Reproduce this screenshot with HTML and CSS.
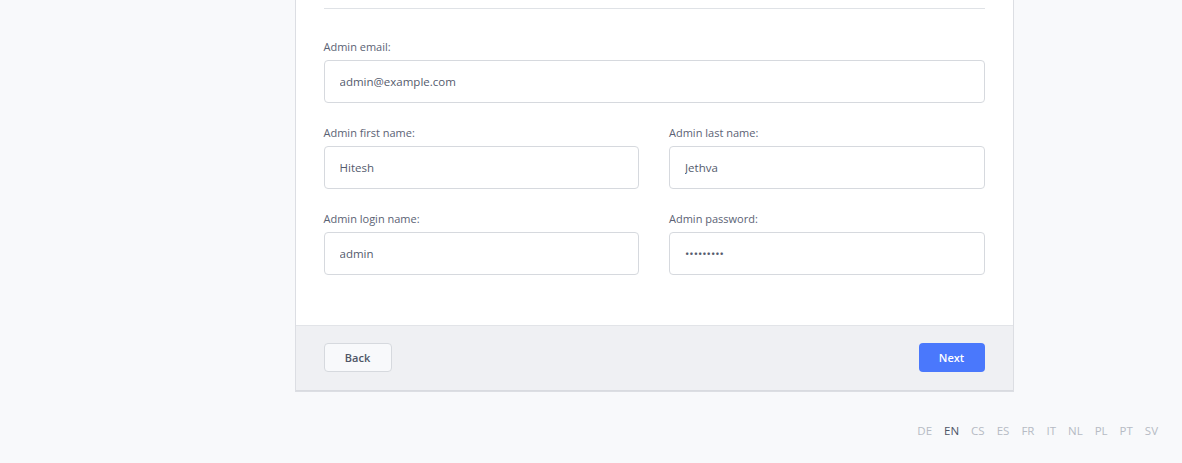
FILE: index.html
```html
<!DOCTYPE html>
<html lang="en">
<head>
    <meta charset="UTF-8">
    <meta name="viewport" content="width=device-width, initial-scale=1.0">
    <title>Install - Admin account</title>
    <link rel="stylesheet" href="styles.css">
</head>
<body>
    <div class="card">
        <div class="card-body">
            <hr class="divider">

            <div class="field">
                <label for="email">Admin email:</label>
                <input type="text" id="email" value="admin@example.com">
            </div>

            <div class="row">
                <div class="field">
                    <label for="firstname">Admin first name:</label>
                    <input type="text" id="firstname" value="Hitesh">
                </div>
                <div class="field">
                    <label for="lastname">Admin last name:</label>
                    <input type="text" id="lastname" value="Jethva">
                </div>
            </div>

            <div class="row">
                <div class="field">
                    <label for="login">Admin login name:</label>
                    <input type="text" id="login" value="admin">
                </div>
                <div class="field">
                    <label for="password">Admin password:</label>
                    <input type="password" id="password" value="123456789">
                </div>
            </div>
        </div>
        <div class="card-footer">
            <button class="btn btn-back">Back</button>
            <button class="btn btn-next">Next</button>
        </div>
    </div>

    <div class="languages">
        <a href="#">DE</a>
        <a href="#" class="active">EN</a>
        <a href="#">CS</a>
        <a href="#">ES</a>
        <a href="#">FR</a>
        <a href="#">IT</a>
        <a href="#">NL</a>
        <a href="#">PL</a>
        <a href="#">PT</a>
        <a href="#">SV</a>
    </div>
</body>
</html>
```

FILE: styles.css
```css
body {
    margin: 0;
    font-family: "Open Sans", Arial, sans-serif;
    background-color: #f8f9fb;
    color: #5b6274;
}
.card {
    width: 719px;
    margin: 0 auto;
    background-color: white;
    border: 1px solid #dcdee3;
    border-top: none;
    box-sizing: border-box;
    position: relative;
    left: 63px;
}
.card-body {
    padding: 8px 28px 50px 28px;
}
.divider {
    border: none;
    border-top: 1px solid #dfe2e6;
    margin: 0 0 31px 0;
}
.field {
    margin-bottom: 23px;
}
.row {
    display: grid;
    grid-template-columns: 1fr 1fr;
    gap: 30px;
}
.row:last-child .field {
    margin-bottom: 0;
}
label {
    display: block;
    font-size: 11px;
    line-height: 14px;
    margin-bottom: 6px;
    color: #5b6274;
}
input {
    display: block;
    width: 100%;
    box-sizing: border-box;
    height: 43px;
    padding: 0 15px;
    border: 1px solid #d6d9de;
    border-radius: 4px;
    font-family: inherit;
    font-size: 11.5px;
    color: #545b6d;
    background-color: white;
}
.card-footer {
    display: flex;
    justify-content: space-between;
    padding: 17px 28px 18px 28px;
    background-color: #eff0f3;
    border-top: 1px solid #e2e4e8;
    border-bottom: 1px solid #d9dbe0;
}
.btn {
    height: 29px;
    border-radius: 4px;
    font-family: inherit;
    font-size: 11px;
    font-weight: 600;
    cursor: pointer;
}
.btn-back {
    width: 68px;
    background-color: #f8f9fb;
    border: 1px solid #d6d9de;
    color: #4e5566;
}
.btn-next {
    width: 66px;
    background-color: #4a78fc;
    border: none;
    color: white;
}
.languages {
    display: flex;
    justify-content: flex-end;
    gap: 12px;
    padding: 31px 24px 0 0;
}
.languages a {
    font-size: 11.5px;
    color: #b6bbc4;
    text-decoration: none;
}
.languages a.active {
    color: #4e5566;
}
```
